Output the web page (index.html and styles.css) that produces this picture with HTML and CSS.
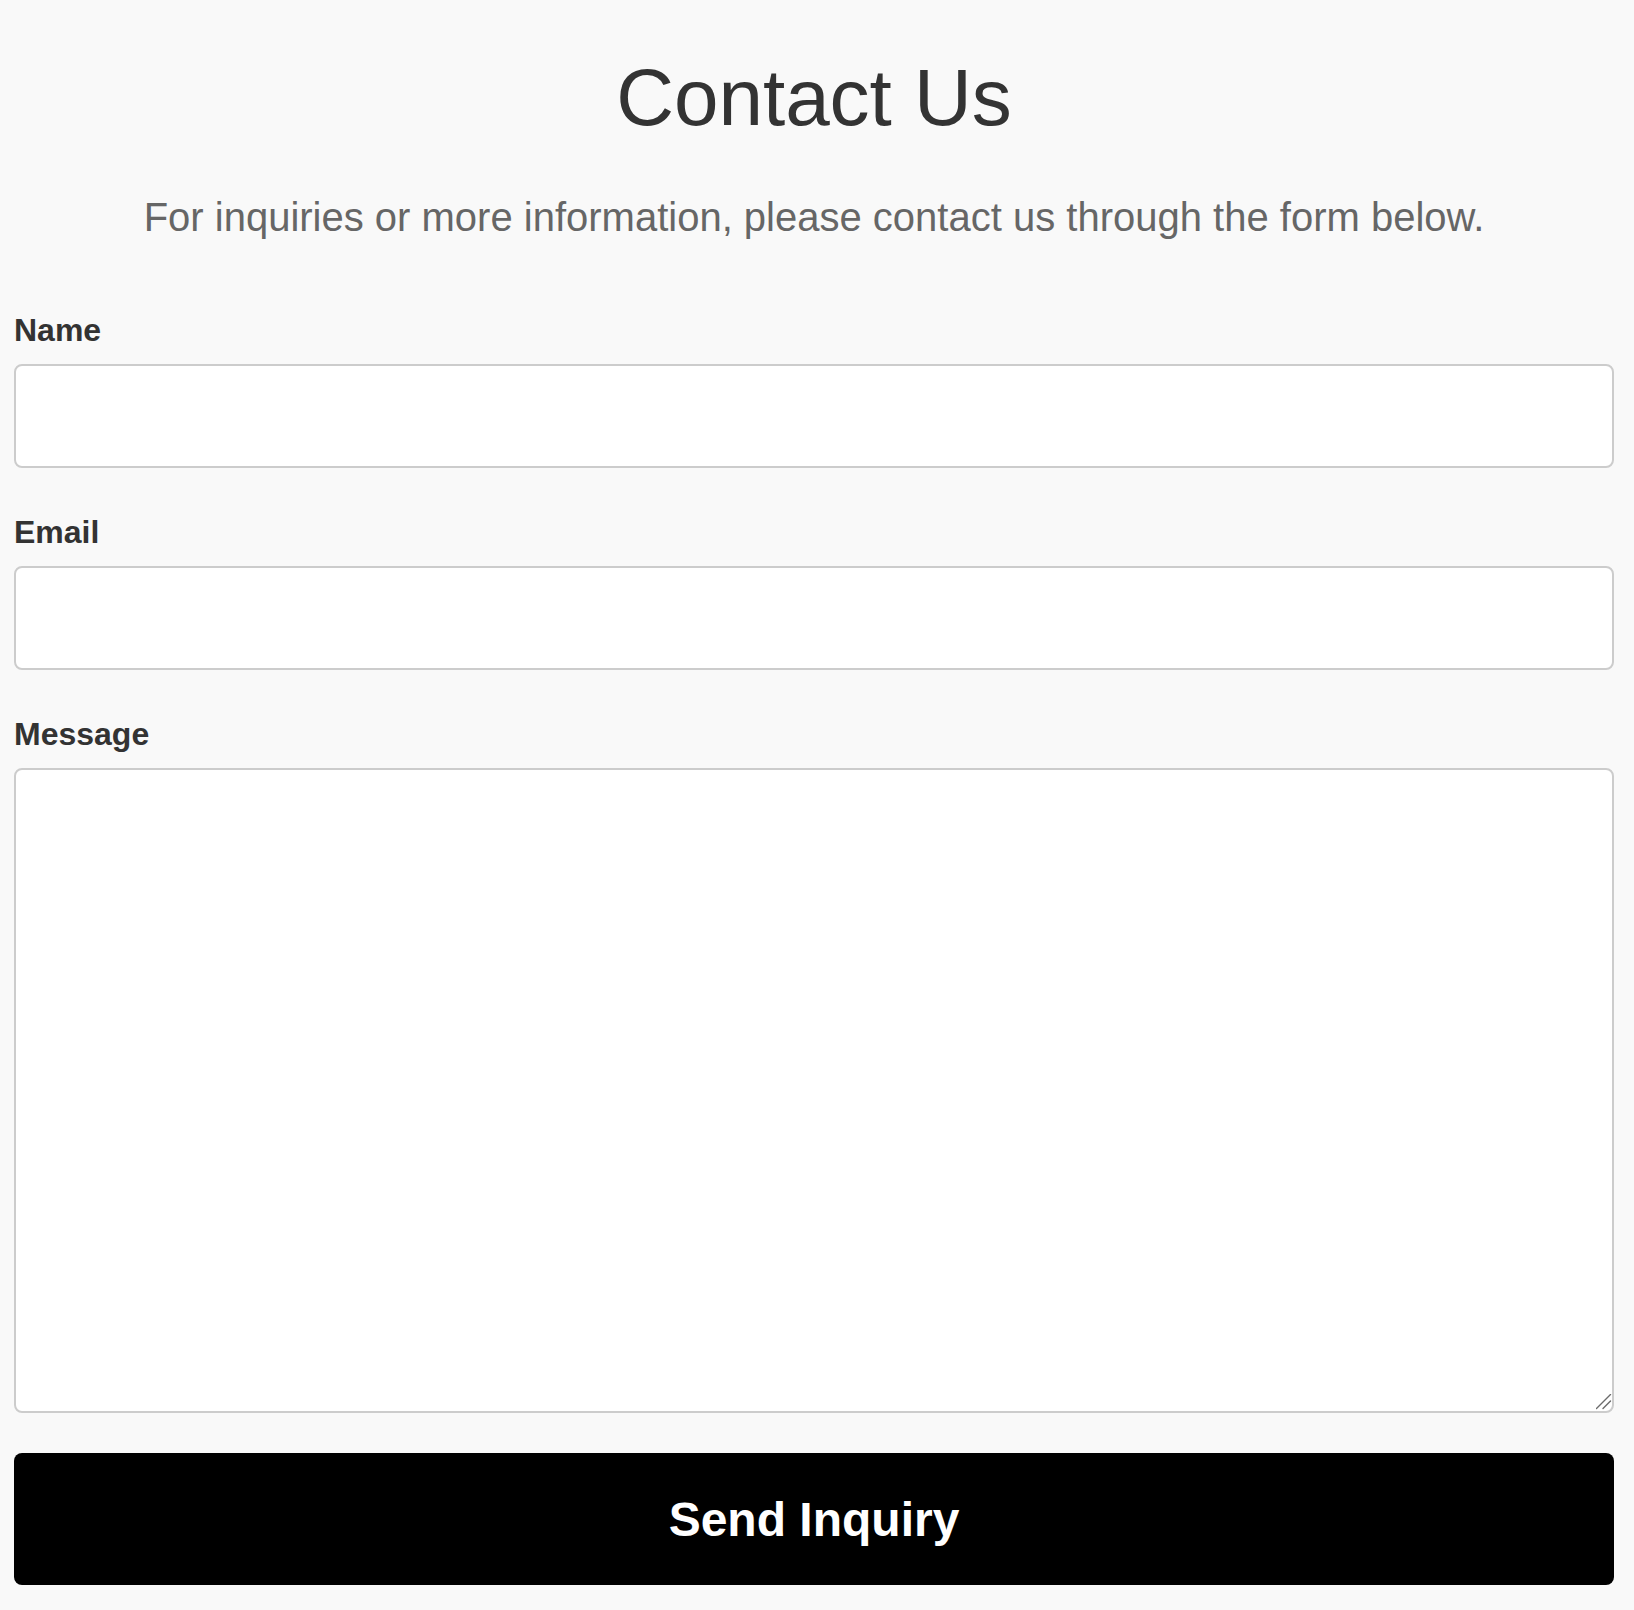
FILE: index.html
```html
<!DOCTYPE html>
<html lang="en">
<head>
<meta charset="utf-8">
<title>Contact Us</title>
<link rel="stylesheet" href="styles.css">
</head>
<body>
<main class="page">
  <h1 class="title">Contact Us</h1>
  <p class="intro">For inquiries or more information, please contact us through the form below.</p>
  <form class="form">
    <div class="field">
      <label class="label" for="name">Name</label>
      <input class="input" id="name" type="text">
    </div>
    <div class="field">
      <label class="label" for="email">Email</label>
      <input class="input" id="email" type="email">
    </div>
    <div class="field">
      <label class="label" for="message">Message</label>
      <div class="textarea-wrap">
        <textarea class="input textarea" id="message"></textarea>
        <svg class="grip" width="16" height="16" viewBox="0 0 16 16" aria-hidden="true">
          <line x1="0.5" y1="14.5" x2="14.5" y2="0.5" stroke="#6b6b6b" stroke-width="1.4" stroke-linecap="round"/>
          <line x1="7" y1="14.5" x2="14.5" y2="7" stroke="#6b6b6b" stroke-width="1.4" stroke-linecap="round"/>
        </svg>
      </div>
    </div>
    <button class="submit" type="submit">Send Inquiry</button>
  </form>
</main>
</body>
</html>
```

FILE: styles.css
```css
* {
  box-sizing: border-box;
}

html, body {
  margin: 0;
  padding: 0;
  background: #f9f9f9;
}

body {
  font-family: "Liberation Sans", Arial, Helvetica, sans-serif;
  color: #333;
}

.page {
  width: 1600px;
  margin-left: 14px;
  padding-top: 52px;
  padding-bottom: 25px;
}

.title {
  margin: 0;
  font-size: 80px;
  line-height: 92px;
  font-weight: 400;
  color: #333;
  text-align: center;
}

.intro {
  margin: 50px 0 0;
  font-size: 40px;
  line-height: 46px;
  color: #666;
  text-align: center;
}

.form {
  margin-top: 72px;
  display: flex;
  flex-direction: column;
}

.field {
  display: flex;
  flex-direction: column;
  margin-bottom: 46px;
}

.field:last-of-type {
  margin-bottom: 40px;
}

.label {
  display: block;
  font-size: 32px;
  line-height: 37px;
  font-weight: 700;
  color: #333;
  margin-bottom: 15px;
}

.input {
  display: block;
  width: 100%;
  height: 104px;
  margin: 0;
  padding: 20px;
  border: 2px solid #ccc;
  border-radius: 8px;
  background: #fff;
  font-family: inherit;
  font-size: 32px;
  color: #333;
  outline: none;
}

.textarea-wrap {
  position: relative;
}

.textarea {
  height: 645px;
  resize: none;
}

.grip {
  position: absolute;
  right: 2px;
  bottom: 3px;
  pointer-events: none;
}

.submit {
  display: flex;
  align-items: center;
  justify-content: center;
  width: 100%;
  height: 132px;
  margin: 0;
  padding: 0;
  border: none;
  border-radius: 8px;
  background: #000;
  color: #fff;
  font-family: inherit;
  font-size: 48px;
  font-weight: 700;
  cursor: pointer;
}
```
